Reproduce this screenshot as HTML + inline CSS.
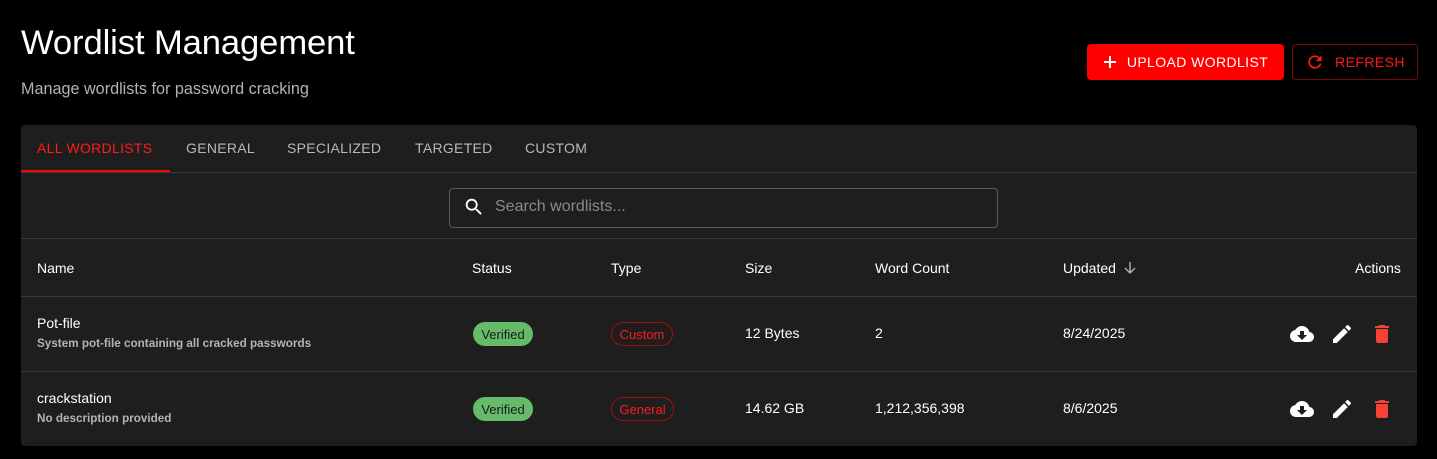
<!DOCTYPE html>
<html><head><style>
*{box-sizing:border-box;margin:0;padding:0}
body{width:1437px;height:459px;background:#000;font-family:"Liberation Sans",Arial,sans-serif;color:#fff;position:relative;overflow:hidden}
.abs{position:absolute}
h1{position:absolute;left:21px;top:24px;font-size:34.6px;font-weight:400;letter-spacing:-0.1px}
.sub{left:21px;top:80px;font-size:16.2px;color:#b3b3b3}
.btn{position:absolute;top:44px;height:36px;border-radius:4px;font-size:14px;letter-spacing:0.4px;display:flex;align-items:center;justify-content:center;gap:10px}
.card{left:21px;top:125px;width:1396px;height:321px;background:#1e1e1e;border-radius:4px}
.tab{top:140px;font-size:14px;color:#b8b8b8;letter-spacing:0.3px}
.hl{height:1px;background:#3a3a3a;left:21px;width:1396px}
.th{top:260px;font-size:14px;color:#fff}
.td{font-size:14px}
.chip{height:24px;border-radius:12px;font-size:13px;display:flex;align-items:center;justify-content:center}
.v{background:#66bb6a;color:#1a1a1a;width:60px;left:473px}
.c{border:1px solid #a01010;color:#ff1a1a;left:611px}
.desc{font-size:11.7px;color:#b3b3b3;font-weight:bold}
</style></head><body>
<h1>Wordlist Management</h1>
<div class="abs sub">Manage wordlists for password cracking</div>
<div class="btn" style="left:1087px;width:197px;background:#ff0000;color:#fff">
<svg width="14" height="14" viewBox="0 0 14 14"><path d="M7 1v12M1 7h12" stroke="#fff" stroke-width="2"/></svg>UPLOAD WORDLIST</div>
<div class="btn" style="left:1292px;width:126px;border:1px solid #7a0a0a;color:#ff1a1a">
<svg width="20" height="20" viewBox="0 0 24 24"><path fill="#ff1a1a" d="M17.65 6.35A7.96 7.96 0 0 0 12 4a8 8 0 1 0 7.73 10h-2.08A6 6 0 1 1 12 6c1.66 0 3.140.69 4.22 1.78L13 11h7V4l-2.35 2.35z"/></svg>REFRESH</div>
<div class="abs card"></div>
<div class="abs tab" style="left:37px;color:#ff1a1a">ALL WORDLISTS</div>
<div class="abs tab" style="left:186px">GENERAL</div>
<div class="abs tab" style="left:287px">SPECIALIZED</div>
<div class="abs tab" style="left:415px">TARGETED</div>
<div class="abs tab" style="left:525px">CUSTOM</div>
<div class="abs hl" style="top:172px"></div>
<div class="abs" style="left:21px;top:170px;width:149px;height:2px;background:#ff0000"></div>
<div class="abs" style="left:449px;top:188px;width:549px;height:40px;border:1px solid #5a5a5a;border-radius:4px"></div>
<svg class="abs" style="left:463px;top:196px" width="22" height="22" viewBox="0 0 24 24"><path fill="#fff" d="M15.5 14h-.79l-.28-.27A6.47 6.47 0 0 0 16 9.5 6.5 6.5 0 1 0 9.5 16c1.61 0 3.09-.59 4.23-1.57l.27.28v.79l5 4.990L20.49 19l-4.99-5zm-6 0C7.01 14 5 11.99 5 9.5S7.01 5 9.5 5 14 7.01 14 9.5 11.99 14 9.5 14z"/></svg>
<div class="abs" style="left:495px;top:198px;font-size:16px;color:#8a8a8a">Search wordlists...</div>
<div class="abs hl" style="top:238px"></div>
<div class="abs th" style="left:37px">Name</div>
<div class="abs th" style="left:472px">Status</div>
<div class="abs th" style="left:611px">Type</div>
<div class="abs th" style="left:745px">Size</div>
<div class="abs th" style="left:875px">Word Count</div>
<div class="abs th" style="left:1063px">Updated</div>
<svg class="abs" style="left:1123px;top:261px" width="14" height="14" viewBox="0 0 14 14"><path d="M7 1v11M2 7l5 5 5-5" stroke="#aaa" stroke-width="1.5" fill="none"/></svg>
<div class="abs th" style="left:1355px">Actions</div>
<div class="abs hl" style="top:296px"></div>

<div class="abs td" style="left:37px;top:315px">Pot-file</div>
<div class="abs desc" style="left:37px;top:337px">System pot-file containing all cracked passwords</div>
<div class="abs chip v" style="top:322px">Verified</div>
<div class="abs chip c" style="top:322px;width:62px">Custom</div>
<div class="abs td" style="left:745px;top:325px">12 Bytes</div>
<div class="abs td" style="left:875px;top:325px">2</div>
<div class="abs td" style="left:1063px;top:325px">8/24/2025</div>
<div class="abs hl" style="top:371px"></div>

<div class="abs td" style="left:37px;top:390px">crackstation</div>
<div class="abs desc" style="left:37px;top:412px">No description provided</div>
<div class="abs chip v" style="top:397px">Verified</div>
<div class="abs chip c" style="top:397px;width:63px">General</div>
<div class="abs td" style="left:745px;top:400px">14.62 GB</div>
<div class="abs td" style="left:875px;top:400px">1,212,356,398</div>
<div class="abs td" style="left:1063px;top:400px">8/6/2025</div>

<svg width="0" height="0" style="position:absolute"><defs>
<g id="cl"><path fill="#fff" d="M19.35 10.04A7.49 7.49 0 0 0 12 4C9.11 4 6.6 5.64 5.35 8.04A5.994 5.994 0 0 0 0 14c0 3.31 2.69 6 6 6h13c2.76 0 5-2.24 5-5 0-2.64-2.05-4.78-4.65-4.96zM17 13l-5 5-5-5h3V9h4v4h3z"/></g>
<g id="pn"><path fill="#fff" d="M3 17.25V21h3.75L17.81 9.94l-3.75-3.75L3 17.25zM20.71 7.04a1 1 0 0 0 0-1.41l-2.34-2.34a1 1 0 0 0-1.41 0l-1.83 1.83 3.75 3.75 1.830-1.83z"/></g>
<g id="tr"><path fill="#f44336" d="M6 19c0 1.1.9 2 2 2h8c1.1 0 2-.9 2-2V7H6v12zM19 4h-3.5l-1-1h-5l-1 1H5v2h14V4z"/></g>
</defs></svg>
<svg class="abs" style="left:1290px;top:322px" width="24" height="24" viewBox="0 0 24 24"><use href="#cl"/></svg>
<svg class="abs" style="left:1330px;top:322px" width="24" height="24" viewBox="0 0 24 24"><use href="#pn"/></svg>
<svg class="abs" style="left:1370px;top:322px" width="24" height="24" viewBox="0 0 24 24"><use href="#tr"/></svg>
<svg class="abs" style="left:1290px;top:397px" width="24" height="24" viewBox="0 0 24 24"><use href="#cl"/></svg>
<svg class="abs" style="left:1330px;top:397px" width="24" height="24" viewBox="0 0 24 24"><use href="#pn"/></svg>
<svg class="abs" style="left:1370px;top:397px" width="24" height="24" viewBox="0 0 24 24"><use href="#tr"/></svg>
</body></html>
